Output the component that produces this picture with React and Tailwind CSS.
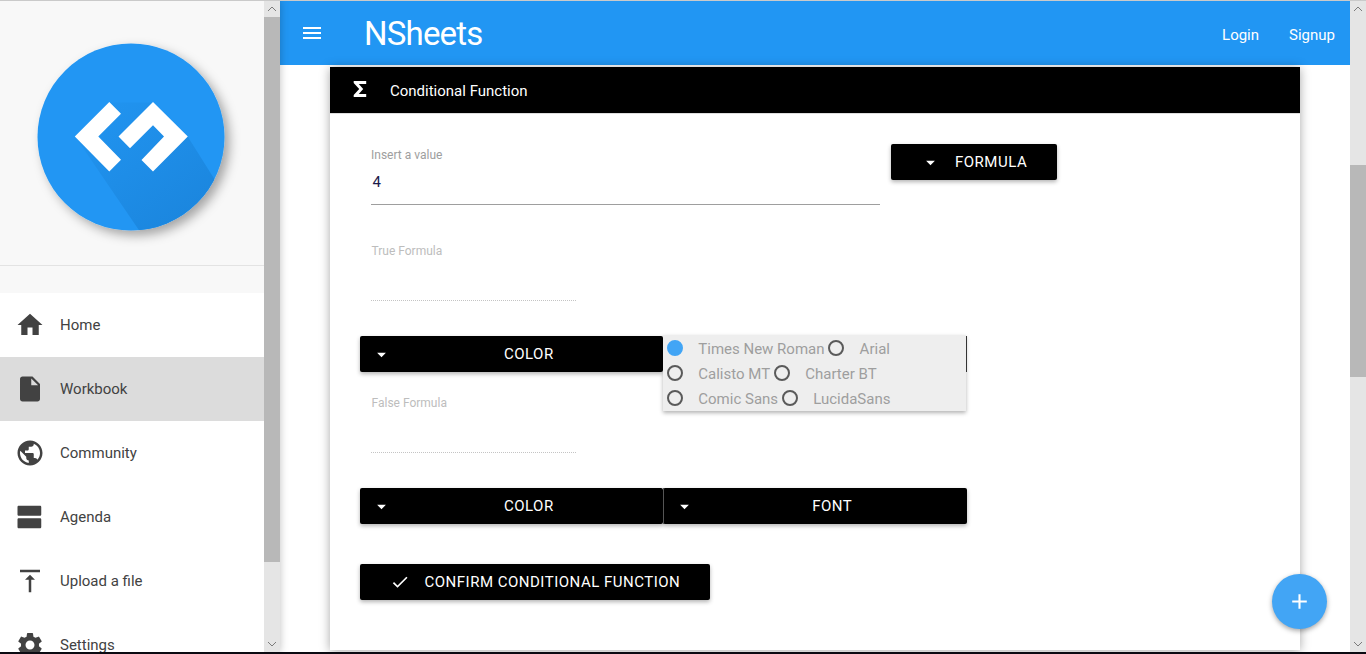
import React from "react";
import {
  MdHome,
  MdInsertDriveFile,
  MdPublic,
  MdVerticalAlignTop,
  MdSettings,
  MdMenu,
  MdArrowDropDown,
  MdCheck,
  MdAdd,
} from "react-icons/md";

function AgendaIcon({ size }) {
  return (
    <svg width={size} height={size} viewBox="0 0 24 24" fill="currentColor">
      <path d="M20 13H3c-.55 0-1 .45-1 1v6c0 .55.45 1 1 1h17c.55 0 1-.45 1-1v-6c0-.55-.45-1-1-1zm0-10H3c-.55 0-1 .45-1 1v6c0 .55.45 1 1 1h17c.55 0 1-.45 1-1V4c0-.55-.45-1-1-1z" />
    </svg>
  );
}

function SigmaIcon() {
  return (
    <svg width="14" height="16" viewBox="0 0 14 16" fill="currentColor" className="block shrink-0">
      <path d="M0.700 0H13.200V3H5.800L10.200 8L5.800 13H13.200V16H0.700V13.900L6.200 8L0.700 2.100Z" />
    </svg>
  );
}

function Logo() {
  return (
    <svg width="220" height="220" viewBox="0 0 220 220" className="block shrink-0">
      <defs>
        <clipPath id="disc">
          <circle cx="101" cy="106" r="93.5" />
        </clipPath>
        <linearGradient id="fold" x1="70" y1="70" x2="160" y2="190" gradientUnits="userSpaceOnUse">
          <stop offset="0" stopColor="#2194f0" />
          <stop offset="1" stopColor="#1b86de" />
        </linearGradient>
        <filter id="drop" x="-20%" y="-20%" width="150%" height="150%">
          <feDropShadow dx="5" dy="5" stdDeviation="5.5" floodColor="#000" floodOpacity="0.34" />
        </filter>
      </defs>
      <circle cx="101" cy="106" r="93.5" fill="#2196f3" filter="url(#drop)" />
      <g clipPath="url(#disc)">
        <path d="M79.500 71.500H123L158 106L220 205V230H130L45.500 106Z" fill="url(#fold)" />
      </g>
      <path
        d="M79.300 71L91 82.700L68.300 105.500L91 128.800L79.300 140.500L44.800 105.500ZM123 71L157.800 105.500L123 140.500L111.500 129L134 105.500L123 94.300L100 117.300L88.500 105.500Z"
        fill="#fff"
      />
    </svg>
  );
}

function Scrollbar({ children }) {
  return (
    <div className="flex w-4 shrink-0 flex-col bg-[#e5e5e5] text-[#7b7b7b]">
      <div className="flex h-4 shrink-0 items-center justify-center">
        <svg width="10" height="6" viewBox="0 0 10 6" fill="none" stroke="currentColor">
          <path d="M1 5L5 1L9 5" />
        </svg>
      </div>
      <div className="min-h-0 flex-1">{children}</div>
      <div className="flex h-4 shrink-0 items-center justify-center">
        <svg width="10" height="6" viewBox="0 0 10 6" fill="none" stroke="currentColor">
          <path d="M1 1L5 5L9 1" />
        </svg>
      </div>
    </div>
  );
}

const menu = [
  { label: "Home", Icon: MdHome },
  { label: "Workbook", Icon: MdInsertDriveFile, active: true },
  { label: "Community", Icon: MdPublic },
  { label: "Agenda", Icon: AgendaIcon },
  { label: "Upload a file", Icon: MdVerticalAlignTop },
  { label: "Settings", Icon: MdSettings },
];

function Sidebar() {
  return (
    <aside className="relative z-10 flex w-[280px] shrink-0 shadow-[0_0_8px_rgba(0,0,0,0.25)]">
      <div className="flex min-w-0 flex-1 flex-col overflow-hidden bg-white">
        <div className="h-[265px] shrink-0 border-b border-[#e3e3e3] bg-[#f8f8f8] pl-[30px] pt-[30px]">
          <Logo />
        </div>
        <div className="h-[27px] shrink-0 bg-[#f8f8f8]" />
        <nav>
          {menu.map(({ label, Icon, active }) => (
            <a
              key={label}
              className={`flex h-16 items-center gap-[15px] pl-[15px] text-[15px] text-[#424242] ${active ? "bg-[#dcdcdc]" : ""}`}
            >
              <Icon size={30} />
              <span>{label}</span>
            </a>
          ))}
        </nav>
      </div>
      <Scrollbar>
        <div className="h-[545px] bg-[#b8b8b8]" />
      </Scrollbar>
    </aside>
  );
}

function WideButton({ label }) {
  return (
    <button className="flex h-9 w-full items-center rounded-[2px] bg-black pl-[11px] text-[15px] tracking-[0.5px] text-white shadow-[0_2px_4px_rgba(0,0,0,0.3)]">
      <MdArrowDropDown size={21} />
      <span className="flex-1 pl-[2.500px] text-center">{label}</span>
    </button>
  );
}

function Radio({ label, checked }) {
  return (
    <label className="flex items-center">
      <span
        className={`mr-[15.300px] size-4 rounded-full border-2 ${checked ? "border-[#42a5f5] bg-[#42a5f5]" : "border-[#5a5a5a]"}`}
      />
      <span className="pt-[3px]">{label}</span>
    </label>
  );
}

function FontMenu() {
  return (
    <div className="-mt-px h-[76px] w-full bg-[#eeeeee] pl-1 text-[15px] text-[#9e9e9e] shadow-[0_2px_4px_rgba(0,0,0,0.3)]">
      {fonts.map((row) => (
        <div key={row[0]} className="flex h-[25px] items-center gap-[3.800px]">
          {row.map((f) => (
            <Radio key={f} label={f} checked={f === "Times New Roman"} />
          ))}
        </div>
      ))}
    </div>
  );
}

function DisabledField({ label }) {
  return (
    <div className="ml-[11px] h-[58px] w-[205px] border-b border-dotted border-[#c4c4c4] pl-[0.5px] text-[12px] leading-4 text-[#bdbdbd]">
      {label}
    </div>
  );
}

const fonts = [
  ["Times New Roman", "Arial"],
  ["Calisto MT", "Charter BT"],
  ["Comic Sans", "LucidaSans"],
];

export default function App() {
  return (
    <div className="flex h-[654px] w-[1366px] flex-col overflow-hidden border-b-2 border-t border-b-[#0b0a12] border-t-[#cacaca] bg-white font-[Roboto,sans-serif]">
      <div className="flex min-h-0 flex-1">
        <Sidebar />
        <div className="relative flex min-w-0 flex-1 flex-col">
          <header className="flex h-16 shrink-0 items-center bg-[#2196f3] pl-5 pr-[15px] text-white">
            <MdMenu size={24} />
            <h1 className="ml-10 pt-px text-[33px] leading-none tracking-[-0.8px]">NSheets</h1>
            <nav className="ml-auto flex gap-[30px] pt-1 text-[15px]">
              <a>Login</a>
              <a>Signup</a>
            </nav>
          </header>
          <main className="min-h-0 flex-1 px-[50px] pt-0.5">
            <section className="h-[583px] bg-white shadow-[0_1px_10px_rgba(0,0,0,0.35)]">
              <div className="flex h-[47px] items-center border-b border-[#dddddd] bg-black pl-[23px] text-[15px] text-white">
                <div className="pb-0.5">
                  <SigmaIcon />
                </div>
                <span className="ml-[23px] pt-0.5">Conditional Function</span>
              </div>
              <div className="flex flex-col items-start px-[30px] pt-[30px]">
                <div className="flex gap-[11px]">
                  <div className="ml-[11px] h-[61px] w-[509px] border-b border-[#9e9e9e]">
                    <div className="pt-[3px] text-[12px] leading-4 text-[#9e9e9e]">Insert a value</div>
                    <div className="pl-[1.5px] pt-[9px] text-[15px] leading-5 text-[#1a1a4a]">4</div>
                  </div>
                  <button className="flex h-9 w-[166px] items-center rounded-[2px] bg-black pl-[29px] text-[15px] tracking-[0.5px] text-white shadow-[0_2px_4px_rgba(0,0,0,0.3)]">
                    <MdArrowDropDown size={21} />
                    <span className="ml-[14px]">FORMULA</span>
                  </button>
                </div>
                <div className="mt-[38px]">
                  <DisabledField label="True Formula" />
                </div>
                <div className="mt-[35px] flex h-9">
                  <div className="w-[303px]">
                    <WideButton label="COLOR" />
                  </div>
                  <div className="z-10 w-[303px] shrink-0">
                    <FontMenu />
                  </div>
                  <div className="relative z-20 h-9 w-px bg-[#333]" />
                </div>
                <div className="mt-[23px]">
                  <DisabledField label="False Formula" />
                </div>
                <div className="mt-[35px] flex">
                  <div className="w-[303px]">
                    <WideButton label="COLOR" />
                  </div>
                  <div className="flex w-[304px]">
                    <div className="-mr-px h-9 w-px shrink-0 bg-[#555] relative z-10" />
                    <WideButton label="FONT" />
                  </div>
                </div>
                <button className="mt-10 flex h-9 w-[350px] items-center rounded-[2px] bg-black pl-[30px] text-[15px] tracking-[0.5px] text-white shadow-[0_2px_4px_rgba(0,0,0,0.3)]">
                  <MdCheck size={20} />
                  <span className="ml-[14.500px]">CONFIRM CONDITIONAL FUNCTION</span>
                </button>
              </div>
            </section>
          </main>
          <button className="absolute bottom-[23px] right-[23px] flex size-[55px] items-center justify-center rounded-full bg-[#42a5f5] text-white shadow-[0_2px_5px_rgba(0,0,0,0.35)]">
            <MdAdd size={25} />
          </button>
        </div>
        <Scrollbar>
          <div className="pt-[148px]">
            <div className="h-[212px] bg-[#b8b8b8]" />
          </div>
        </Scrollbar>
      </div>
    </div>
  );
}
